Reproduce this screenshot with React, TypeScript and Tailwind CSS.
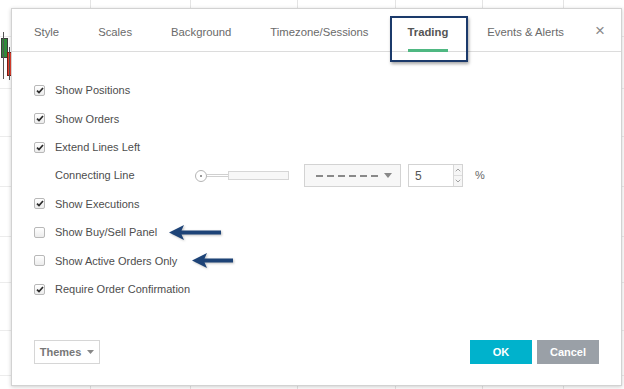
import { ChevronDown, ChevronUp } from 'lucide-react';

const TABS = ['Style', 'Scales', 'Background', 'Timezone/Sessions', 'Trading', 'Events & Alerts'];

const ROWS: { label: string; checked: boolean }[] = [
  { label: 'Show Positions', checked: true },
  { label: 'Show Orders', checked: true },
  { label: 'Extend Lines Left', checked: true },
];

const ROWS_AFTER: { label: string; checked: boolean; arrow?: number; gap?: number }[] = [
  { label: 'Show Executions', checked: true },
  { label: 'Show Buy/Sell Panel', checked: false, arrow: 52, gap: 12 },
  { label: 'Show Active Orders Only', checked: false, arrow: 41, gap: 15 },
  { label: 'Require Order Confirmation', checked: true },
];

function Check({ checked }: { checked: boolean }) {
  return (
    <span className="flex h-[11px] w-[11px] items-center justify-center rounded-[2px] border border-[#b8b8b8] bg-gradient-to-b from-white to-[#ececec]">
      {checked && (
        <svg width="8" height="7" viewBox="0 0 8 7">
          <path d="M1 3.6 L3 5.6 L7 1" fill="none" stroke="#2b2b2b" strokeWidth="1.7" />
        </svg>
      )}
    </span>
  );
}

function Arrow({ width }: { width: number }) {
  return (
    <svg width={width} height="17" viewBox={`0 0 ${width} 17`} className="drop-shadow-[1px_1px_1px_rgba(0,0,0,0.25)]">
      <path d={`M0 8.5 L15 1 L12.5 6.5 L${width} 6.5 L${width} 10.5 L12.5 10.5 L15 16 Z`} fill="#1d4377" />
    </svg>
  );
}

function Row({ label, checked, arrow, gap }: { label: string; checked: boolean; arrow?: number; gap?: number }) {
  return (
    <div className="flex h-[28.5px] items-center">
      <Check checked={checked} />
      <span className="ml-[10px]">{label}</span>
      {arrow && (
        <span className="flex" style={{ marginLeft: gap }}>
          <Arrow width={arrow} />
        </span>
      )}
    </div>
  );
}

export default function App() {
  return (
    <div className="relative h-[389px] w-[624px] overflow-hidden bg-white font-['Liberation_Sans',Arial,sans-serif] text-[11px] text-[#4d4d4d]">
      {/* chart grid behind */}
      <div className="absolute inset-0">
        {[90, 190, 297, 395, 482, 563].map((x) => (
          <div key={x} className="absolute top-0 h-full w-px bg-[#e4e4e4]" style={{ left: x }} />
        ))}
        {[36, 88, 136, 186, 236, 282, 330, 375].map((y) => (
          <div key={y} className="absolute left-0 h-px w-full bg-[#ececec]" style={{ top: y }} />
        ))}
        <div className="absolute left-[1px] top-[38px] h-[20px] w-[7px] border border-[#3c3c3c] bg-[#2f8a3a]" />
        <div className="absolute left-[3px] top-[32px] h-[47px] w-px bg-[#555]" />
        <div className="absolute left-[7px] top-[52px] h-[24px] w-[5px] border border-[#7a1a12] bg-[#e2412f]" />
        <div className="absolute left-[9px] top-[47px] h-[33px] w-px bg-[#555]" />
      </div>

      {/* dialog */}
      <div className="absolute left-[11px] top-[8px] flex h-[378px] w-[611px] flex-col border border-[#d2d2d2] bg-white shadow-[0_1px_4px_rgba(0,0,0,0.2)]">
        <div className="relative flex h-[43px] items-center gap-[39px] whitespace-nowrap border-b border-[#dcdcdc] pl-[22px] pt-[5px] text-[11.3px] text-[#6a6a6a]">
          {TABS.map((t) => {
            const active = t === 'Trading';
            return (
              <div
                key={t}
                className={active ? 'relative flex h-full items-center font-bold text-[#555]' : 'flex h-full items-center'}
              >
                {active && (
                  <>
                    <span className="absolute left-[-18px] right-[-20px] top-[2px] h-[46px] border-2 border-[#1b3a6b] shadow-[1px_2px_3px_rgba(0,0,0,0.35)]" />
                    <span className="absolute bottom-[-1px] left-0 right-0 h-[3px] bg-[#4fb882]" />
                  </>
                )}
                <span>{t}</span>
              </div>
            );
          })}
          <span className="absolute right-[16px] top-[13px] text-[17px] leading-none text-[#8a8a8a]">×</span>
        </div>

        <div className="flex flex-col pl-[22px] pt-[24px]">
          {ROWS.map((r) => (
            <Row key={r.label} label={r.label} checked={r.checked} />
          ))}
          <div className="flex h-[28px] items-center">
            <span className="ml-[21px] w-[140px]">Connecting Line</span>
            <div className="flex items-center">
              <span className="flex h-[12px] w-[12px] items-center justify-center rounded-full border border-[#b5b5b5] bg-white">
                <span className="h-[2px] w-[2px] rounded-full bg-[#777]" />
              </span>
              <span className="h-[3px] w-[21px] border-y border-[#d0d0d0]" />
              <span className="h-[9px] w-[61px] border border-[#d6d6d6] bg-[#f7f7f7]" />
            </div>
            <div className="ml-[15px] flex h-[23px] w-[97px] items-center justify-between border border-[#d3d3d3] bg-[#f7f7f7] pl-[11px] pr-[8px]">
              <svg width="62" height="2">
                <line x1="0" y1="1" x2="62" y2="1" stroke="#666" strokeWidth="1.3" strokeDasharray="7 4" />
              </svg>
              <svg width="8" height="5" viewBox="0 0 8 5">
                <path d="M0 0 H8 L4 5 Z" fill="#888" />
              </svg>
            </div>
            <div className="ml-[7px] flex h-[23px] w-[55px] items-center border border-[#d3d3d3] bg-white">
              <span className="flex-1 pl-[6px] text-[12px] text-[#555]">5</span>
              <div className="flex h-full w-[9px] flex-col border-l border-[#d8d8d8] bg-[#f6f6f6] text-[#777]">
                <ChevronUp size={8} strokeWidth={2} className="flex-1" />
                <ChevronDown size={8} strokeWidth={2} className="flex-1 border-t border-[#ddd]" />
              </div>
            </div>
            <span className="ml-[12px] text-[#666]">%</span>
          </div>
          {ROWS_AFTER.map((r) => (
            <Row key={r.label} label={r.label} checked={r.checked} arrow={r.arrow} gap={r.gap} />
          ))}
        </div>

        <div className="mt-auto flex items-center justify-between pb-[21px] pl-[22px] pr-[22px]">
          <div className="flex h-[24px] w-[66px] items-center justify-center gap-[6px] border border-[#d6d6d6] text-[11px] font-bold text-[#777]">
            Themes
            <svg width="7" height="4" viewBox="0 0 7 4">
              <path d="M0 0 H7 L3.5 4 Z" fill="#888" />
            </svg>
          </div>
          <div className="flex gap-[5px]">
            <div className="flex h-[24px] w-[62px] items-center justify-center bg-[#00b2cc] text-[11px] font-bold text-white">OK</div>
            <div className="flex h-[24px] w-[62px] items-center justify-center bg-[#9aa0a7] text-[11px] font-bold text-white">Cancel</div>
          </div>
        </div>
      </div>
    </div>
  );
}
